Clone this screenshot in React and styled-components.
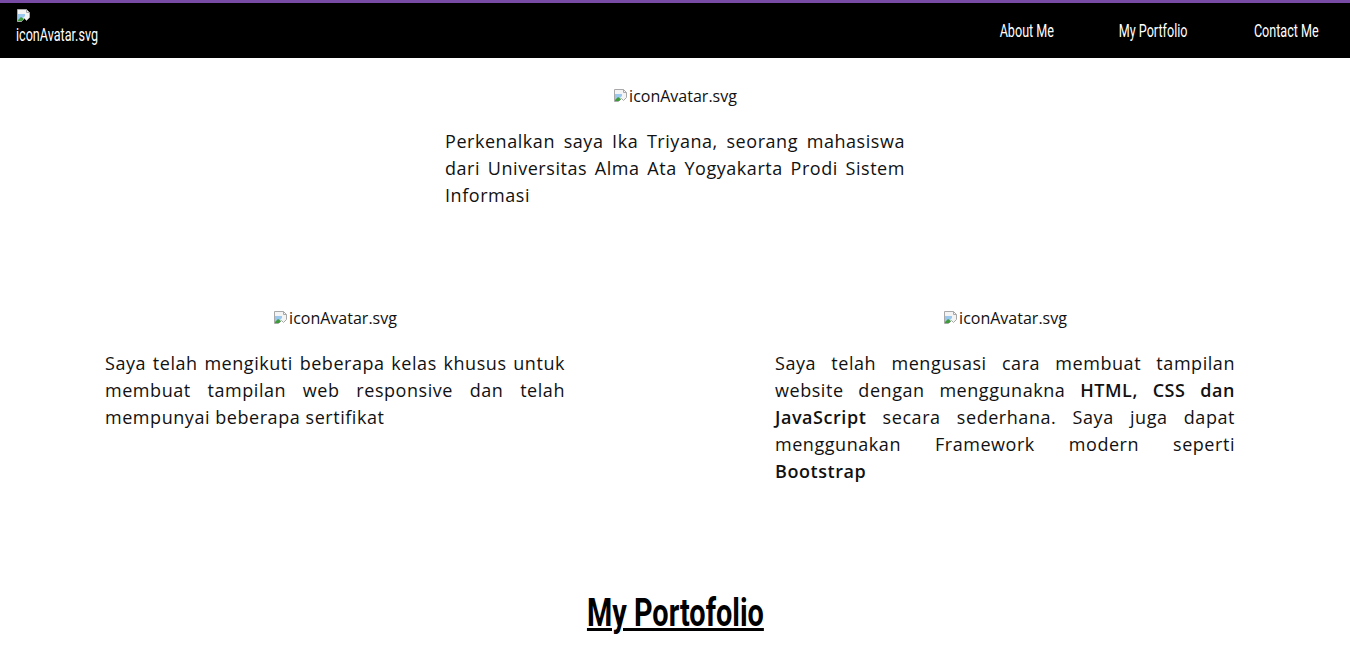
import styled, { createGlobalStyle } from "styled-components";

const GlobalStyle = createGlobalStyle`
  html, body {
    margin: 0;
    padding: 0;
    background: #ffffff;
  }
  body {
    font-family: "Open Sans", "Noto Sans", sans-serif;
    color: #111111;
  }
  * {
    box-sizing: border-box;
  }
`;

// no Oswald offline: squeeze Roboto to get the same tall, narrow look
const Squeeze = styled.span`
  display: inline-block;
  white-space: nowrap;
  font-family: Roboto, "Liberation Sans", sans-serif;
  font-weight: ${(p) => p.$weight || 400};
  transform: scaleX(${(p) => p.$scale || 0.7});
  transform-origin: ${(p) => p.$origin || "center"};
`;

const NavBar = styled.nav`
  display: flex;
  align-items: center;
  justify-content: space-between;
  height: 58px;
  background: #000000;
  border-top: 3px solid #774aa4;
  padding: 0 32px 0 16px;
  color: #ffffff;
`;

const Logo = styled.div`
  align-self: flex-start;
  display: flex;
  flex-direction: column;
  align-items: flex-start;
  gap: 1px;
  padding-top: 5px;
  font-size: 18px;
  line-height: 20px;
`;

const NavLinks = styled.ul`
  display: flex;
  gap: 68px;
  list-style: none;
  margin: 0;
  padding: 0;
`;

const NavLink = styled.a`
  display: flex;
  justify-content: center;
  width: ${(p) => p.$w}px;
  color: #ffffff;
  text-decoration: none;
  font-size: 18px;
  line-height: 22px;
`;

const Main = styled.main`
  display: flex;
  flex-direction: column;
  align-items: center;
`;

const Intro = styled.section`
  width: 460px;
  display: flex;
  flex-direction: column;
  align-items: center;
  padding-top: 27px;
`;

const Skills = styled.section`
  width: 1340px;
  align-self: flex-start;
  display: grid;
  grid-template-columns: 1fr 1fr;
  margin-top: 98px;
`;

const SkillCol = styled.div`
  display: flex;
  flex-direction: column;
  align-items: center;
`;

const AltImage = styled.span`
  display: inline-flex;
  align-items: center;
  font-size: 16px;
  line-height: 22px;
  color: #111111;
`;

const Paragraph = styled.p`
  width: 460px;
  margin: 21px 0 0;
  font-size: 18px;
  line-height: 27px;
  letter-spacing: 0.55px;
  text-align: justify;
  color: #111111;
`;

const Strong = styled.b`
  font-weight: 600;
`;

const Heading = styled.h2`
  margin: 104px 0 0;
  font-size: 38px;
  line-height: 44px;
  color: #000000;
  span {
    text-decoration: underline;
    text-underline-offset: 2px;
    text-decoration-thickness: 3px;
  }
`;

const BrokenIcon = () => (
  <svg width="16" height="16" viewBox="0 0 16 16">
    <path d="M1.5 1.5h9l3 3v5l-3 3-2-2-3 3H1.5z" fill="#f4f4f4" stroke="#a8a8a8" />
    <path d="M10.5 1.5v3h3" fill="none" stroke="#a8a8a8" />
    <path d="M2 6h7v2L6 11l-2 2H2z" fill="#9cc8ee" />
    <path d="M2 12l3-3 3 2-2 2H2z" fill="#3f9b3a" />
  </svg>
);

const MissingImage = ({ alt }) => (
  <AltImage>
    <BrokenIcon />
    {alt}
  </AltImage>
);

const links = [
  { href: "#about", label: "About Me", w: 51 },
  { href: "#portfolio", label: "My Portfolio", w: 67 },
  { href: "#contact", label: "Contact Me", w: 63 },
];

export default function App() {
  return (
    <>
      <GlobalStyle />
      <NavBar>
        <Logo>
          <BrokenIcon />
          <Squeeze $origin="left">iconAvatar.svg</Squeeze>
        </Logo>
        <NavLinks>
          {links.map((l) => (
            <li key={l.href}>
              <NavLink href={l.href} $w={l.w}>
                <Squeeze>{l.label}</Squeeze>
              </NavLink>
            </li>
          ))}
        </NavLinks>
      </NavBar>
      <Main>
        <Intro>
          <MissingImage alt="iconAvatar.svg" />
          <Paragraph>
            Perkenalkan saya Ika Triyana, seorang mahasiswa dari Universitas Alma Ata
            Yogyakarta Prodi Sistem Informasi
          </Paragraph>
        </Intro>
        <Skills>
          <SkillCol>
            <MissingImage alt="iconAvatar.svg" />
            <Paragraph>
              Saya telah mengikuti beberapa kelas khusus untuk membuat tampilan web
              responsive dan telah mempunyai beberapa sertifikat
            </Paragraph>
          </SkillCol>
          <SkillCol>
            <MissingImage alt="iconAvatar.svg" />
            <Paragraph>
              Saya telah mengusasi cara membuat tampilan website dengan menggunakna{" "}
              <Strong>HTML, CSS dan JavaScript</Strong> secara sederhana. Saya juga dapat
              menggunakan Framework modern seperti <Strong>Bootstrap</Strong>
            </Paragraph>
          </SkillCol>
        </Skills>
        <Heading id="portfolio">
          <Squeeze $weight={700} $scale={0.76}>My Portofolio</Squeeze>
        </Heading>
      </Main>
    </>
  );
}
